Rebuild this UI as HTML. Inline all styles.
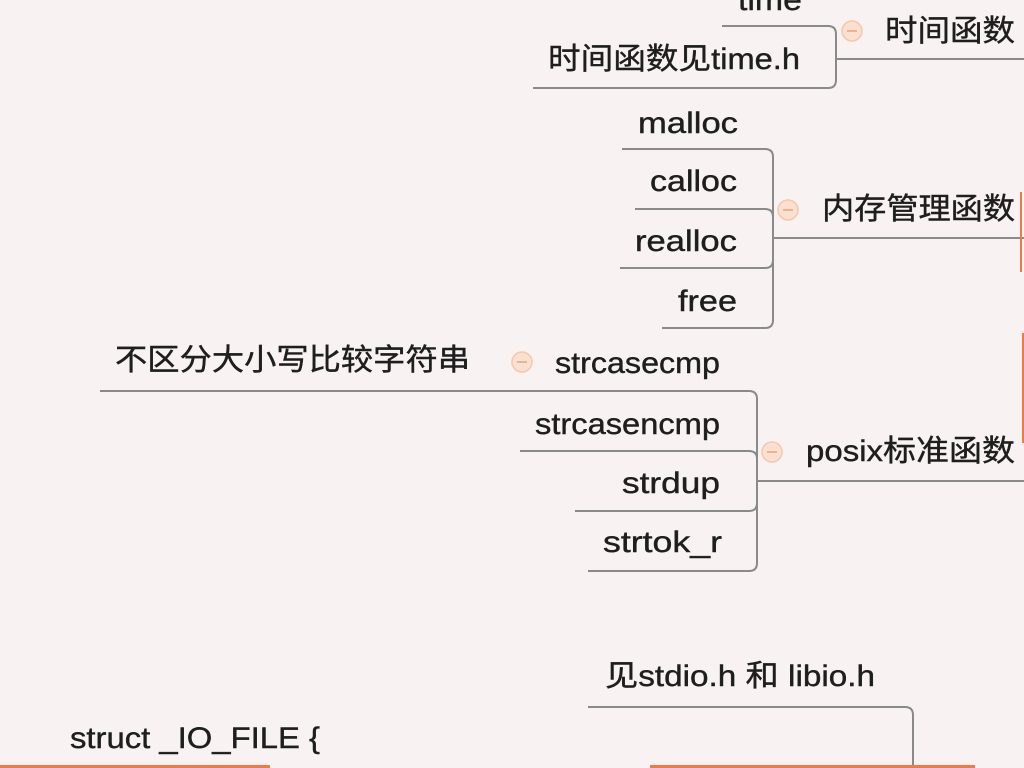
<!DOCTYPE html>
<html><head><meta charset="utf-8"><style>
html,body{margin:0;padding:0;background:#f8f2f2;width:1024px;height:768px;overflow:hidden}
svg{display:block}
text{font-family:"Liberation Sans","Noto Sans CJK SC",sans-serif;font-size:30px;fill:#1e1e1e;stroke:#1e1e1e;stroke-width:0.4}
</style></head><body>
<svg width="1024" height="768" viewBox="0 0 1024 768" xmlns="http://www.w3.org/2000/svg">
<g fill="none" stroke="#8a8a8a" stroke-width="2">
<path d="M722 26 H828 Q836 26 836 34 V80 Q836 88 828 88 H533"/>
<path d="M836 59 H1024"/>
<path d="M622 149 H765 Q773 149 773 157 V320 Q773 328 765 328 H662"/>
<path d="M635 209 H765 Q773 209 773 217"/>
<path d="M620 268 H765 Q773 268 773 260"/>
<path d="M773 238 H1024"/>
<path d="M100 391 H749 Q757 391 757 399 V563 Q757 571 749 571 H588"/>
<path d="M520 451 H749 Q757 451 757 459"/>
<path d="M575 511 H749 Q757 511 757 503"/>
<path d="M757 481 H1024"/>
<path d="M588 707 H905 Q913 707 913 715 V768"/>
</g>
<g fill="#fbe0cf" stroke="#f2c8ae" stroke-width="1.5">
<circle cx="852" cy="31" r="10"/>
<circle cx="788" cy="210" r="10"/>
<circle cx="522" cy="362" r="10"/>
<circle cx="772" cy="452" r="10"/>
</g>
<g stroke="#e0a585" stroke-width="1.5">
<path d="M847 31 H857"/><path d="M783 210 H793"/><path d="M517 362 H527"/><path d="M767 452 H777"/>
</g>
<text x="738" y="10" textLength="64" lengthAdjust="spacingAndGlyphs">time</text>
<text x="885" y="41" textLength="130" lengthAdjust="spacingAndGlyphs">时间函数</text>
<text x="548" y="69" textLength="252" lengthAdjust="spacingAndGlyphs">时间函数见time.h</text>
<text x="638" y="133" textLength="100" lengthAdjust="spacingAndGlyphs">malloc</text>
<text x="650" y="191" textLength="87" lengthAdjust="spacingAndGlyphs">calloc</text>
<text x="635" y="251" textLength="102" lengthAdjust="spacingAndGlyphs">realloc</text>
<text x="678" y="311" textLength="59" lengthAdjust="spacingAndGlyphs">free</text>
<text x="822" y="219" textLength="193" lengthAdjust="spacingAndGlyphs">内存管理函数</text>
<text x="115" y="370" textLength="355" lengthAdjust="spacingAndGlyphs">不区分大小写比较字符串</text>
<text x="555" y="373" textLength="165" lengthAdjust="spacingAndGlyphs">strcasecmp</text>
<text x="535" y="434" textLength="185" lengthAdjust="spacingAndGlyphs">strcasencmp</text>
<text x="622" y="493" textLength="98" lengthAdjust="spacingAndGlyphs">strdup</text>
<text x="603" y="552" textLength="119" lengthAdjust="spacingAndGlyphs">strtok_r</text>
<text x="806" y="461" textLength="209" lengthAdjust="spacingAndGlyphs">posix标准函数</text>
<text x="605" y="686" textLength="270" lengthAdjust="spacingAndGlyphs">见stdio.h 和 libio.h</text>
<text x="70" y="748" textLength="250" lengthAdjust="spacingAndGlyphs">struct _IO_FILE {</text>
<rect x="1020" y="192" width="2" height="80" fill="#ee7a4a"/>
<rect x="1022" y="333" width="2" height="110" fill="#ee7a4a"/>
<rect x="0" y="765" width="270" height="3" fill="#ee7a4a"/>
<rect x="650" y="765" width="325" height="3" fill="#ee7a4a"/>
</svg>
</body></html>
